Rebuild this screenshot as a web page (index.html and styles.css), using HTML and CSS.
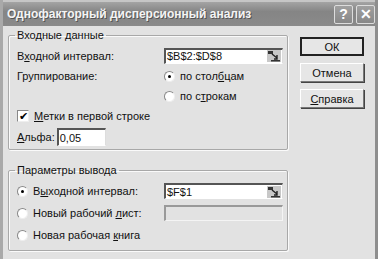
FILE: index.html
```html
<!DOCTYPE html>
<html lang="ru">
<head>
  <meta charset="UTF-8">
  <title>Однофакторный дисперсионный анализ</title>
  <link rel="stylesheet" href="styles.css">
</head>
<body>

<div class="window">
  <div class="titlebar">
    <span class="title">Однофакторный дисперсионный анализ</span>
    <span class="tbtn">?</span>
    <span class="tbtn">&#x2715;</span>
  </div>

  <div class="content">
    <div class="groups">
      <fieldset class="group group-in">
        <legend>Входные данные</legend>
        <div class="row r1">
          <span class="label">В<u>х</u>одной интервал:</span>
          <span class="field">$B$2:$D$8<span class="ref"><svg width="14" height="12" viewBox="0 0 14 12"><rect x="0" y="0" width="14" height="12" fill="#c8c8c8"/><rect x="1" y="1" width="5" height="3" fill="#333"/><path d="M5 4 L10 8 M10 5 L10 9 L7 9" stroke="#222" stroke-width="1.4" fill="none"/><rect x="4" y="10" width="9" height="1.5" fill="#333"/></svg></span></span>
        </div>
        <div class="row r2">
          <span class="label">Группирование:</span>
          <span class="opt"><span class="radio on"></span><span>по стол<u>б</u>цам</span></span>
        </div>
        <div class="row r3">
          <span class="label"></span>
          <span class="opt"><span class="radio"></span><span>по с<u>т</u>рокам</span></span>
        </div>
        <div class="row r4">
          <span class="check">&#x2714;</span><span><u>М</u>етки в первой строке</span>
        </div>
        <div class="row r5">
          <span><u>А</u>льфа:</span><span class="field small">0,05</span>
        </div>
      </fieldset>

      <fieldset class="group group-out">
        <legend>Параметры вывода</legend>
        <div class="row">
          <span class="label opt"><span class="radio on"></span><span>В<u>ы</u>ходной интервал:</span></span>
          <span class="field">$F$1<span class="ref"><svg width="14" height="12" viewBox="0 0 14 12"><rect x="0" y="0" width="14" height="12" fill="#c8c8c8"/><rect x="1" y="1" width="5" height="3" fill="#333"/><path d="M5 4 L10 8 M10 5 L10 9 L7 9" stroke="#222" stroke-width="1.4" fill="none"/><rect x="4" y="10" width="9" height="1.5" fill="#333"/></svg></span></span>
        </div>
        <div class="row">
          <span class="label opt"><span class="radio"></span><span>Новый рабочий <u>л</u>ист:</span></span>
          <span class="field disabled"></span>
        </div>
        <div class="row">
          <span class="label opt"><span class="radio"></span><span>Новая рабочая <u>к</u>нига</span></span>
        </div>
      </fieldset>
    </div>

    <div class="buttons">
      <button class="btn default">ОК</button>
      <button class="btn">Отмена</button>
      <button class="btn"><u>С</u>правка</button>
    </div>
  </div>
</div>

</body>
</html>
```

FILE: styles.css
```css
body {
  margin: 0;
  padding: 0;
  background-color: #fff;
  font-family: "Liberation Sans", Arial, sans-serif;
  font-size: 11px;
  color: #111;
}

.window {
  width: 378px;
  height: 259px;
  box-sizing: border-box;
  background-color: #e2e2e2;
  border-left: 3px solid #a9a9a9;
  border-right: 3px solid #8e8e8e;
  padding-top: 2px;
  overflow: hidden;
  background-image: linear-gradient(#c6c6c6, #c6c6c6);
  background-repeat: no-repeat;
  background-size: 100% 2px;
}

.titlebar {
  height: 24px;
  display: flex;
  align-items: center;
  gap: 3px;
  padding: 0 0 0 4px;
  background: linear-gradient(#a4a4a4, #858585 40%, #8a8a8a);
}

.title {
  flex: 1;
  font-size: 12px;
  font-weight: bold;
  color: #f4f4f4;
  text-shadow: 1px 1px 0 #555;
}

.tbtn {
  width: 19px;
  height: 19px;
  box-sizing: border-box;
  border: 1px solid #ddd;
  border-radius: 2px;
  background: linear-gradient(#a0a0a0, #888);
  color: #fff;
  font-weight: bold;
  font-size: 14px;
  line-height: 17px;
  text-align: center;
}

.content {
  display: flex;
  padding: 3px 0 0 5px;
}

.groups {
  width: 280px;
}

.group {
  margin: 0;
  padding: 0 0 1px 8px;
  border: 1px solid #a8a8a8;
  box-shadow: 1px 1px 0 #fafafa, inset 1px 1px 0 #fafafa;
  border-radius: 2px;
}

.group legend {
  padding: 0 2px;
  margin-left: -2px;
  line-height: 12px;
}

.group-out {
  margin-top: 14px;
  padding-bottom: 4px;
}

.row {
  display: flex;
  align-items: center;
  height: 20px;
}

.r1 {
  margin-top: 4px;
  height: 21px;
}

.r5 {
  height: 22px;
}

.label {
  width: 147px;
  flex: none;
}

.opt {
  display: flex;
  align-items: center;
}

.radio {
  width: 11px;
  height: 11px;
  box-sizing: border-box;
  border-radius: 50%;
  border: 1px solid #888;
  border-right-color: #eee;
  border-bottom-color: #eee;
  background: #fff;
  margin-right: 5px;
  position: relative;
}

.radio.on::after {
  content: "";
  position: absolute;
  left: 3px;
  top: 3px;
  width: 3px;
  height: 3px;
  border-radius: 50%;
  background: #000;
}

.field {
  width: 119px;
  height: 16px;
  box-sizing: border-box;
  border-top: 2px solid #555;
  border-left: 2px solid #555;
  border-right: 1px solid #ddd;
  border-bottom: 1px solid #fff;
  background: #fff;
  display: flex;
  align-items: center;
  justify-content: space-between;
  padding: 0 1px;
  font-size: 11px;
}

.field.small {
  width: 49px;
  height: 18px;
  margin-left: 2px;
}

.field.disabled {
  background: #e2e2e2;
  border-color: #999 #f4f4f4 #f4f4f4 #999;
}

.ref {
  display: flex;
}

.check {
  width: 12px;
  height: 12px;
  box-sizing: border-box;
  border: 1px solid #888;
  border-right-color: #eee;
  border-bottom-color: #eee;
  background: #fff;
  font-size: 11px;
  line-height: 10px;
  text-align: center;
  margin-right: 5px;
  color: #000;
}

.group-out .row {
  height: 22px;
}

.group-out legend + .row {
  margin-top: 4px;
}

.buttons {
  display: flex;
  flex-direction: column;
  gap: 7px;
  margin-left: 12px;
  padding-top: 8px;
}

.btn {
  width: 64px;
  height: 19px;
  padding: 0;
  font-family: "Liberation Sans", Arial, sans-serif;
  font-size: 11px;
  color: #111;
  background: #e6e6e6;
  border: 1px solid #fff;
  border-right-color: #777;
  border-bottom-color: #777;
  box-shadow: 1px 1px 0 #444;
}

.btn.default {
  border: 2px solid #222;
  box-shadow: none;
}
```
